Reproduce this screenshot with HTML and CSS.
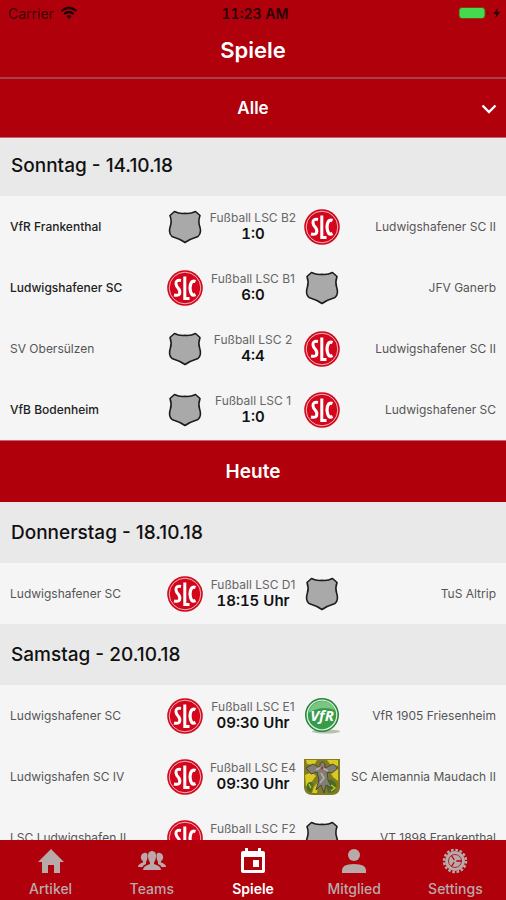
FILE: index.html
```html
<!DOCTYPE html>
<html lang="de">
<head>
    <meta charset="UTF-8" />
    <meta name="viewport" content="width=device-width, initial-scale=1.0" />
    <title>Spiele</title>
    <link rel="stylesheet" href="styles.css">
</head>
<body>
    <!-- Shared club crests -->
    <svg class="sprite" aria-hidden="true">
        <symbol id="crest-blank" viewBox="0 0 36 36">
            <path d="M7.500 2.500 Q12.500 5 18 4.300 Q23.500 5 28.500 2.500 L33 6.500 Q31 12 32.600 17 Q35 24 31 27.500 Q23 30 18 33.500 Q13 30 5 27.500 Q1 24 3.400 17 Q5 12 3 6.500 Z" fill="#a9a9a9" stroke="#1c1c1c" stroke-width="1.600" stroke-linejoin="round" />
        </symbol>
        <symbol id="crest-slc" viewBox="0 0 36 36">
            <circle cx="18" cy="18" r="17.800" fill="#d2071d" />
            <circle cx="18" cy="18" r="15.800" fill="none" stroke="#f3b3b8" stroke-width="1" />
            <g fill="none" stroke="#fff">
                <path d="M14 10.500 Q8.500 9.500 9 14 Q9.200 16 11.500 18.500 Q13.500 21 12.500 24 Q11.500 26 7 25" stroke-width="3" />
                <path d="M17.800 6.500 V28.500 H22.500" stroke-width="3" />
                <path d="M28.500 11.500 Q23.500 9.500 23 18 Q23.500 27 28.500 24.500" stroke-width="3.200" />
            </g>
        </symbol>
        <symbol id="crest-vfr" viewBox="0 0 36 36">
            <ellipse cx="22" cy="33.500" rx="14" ry="2" fill="#b5c2ac" />
            <circle cx="18" cy="17" r="17" fill="#1f8439" />
            <circle cx="18" cy="17" r="14.800" fill="#369c48" stroke="#d9efd9" stroke-width="1.300" />
            <path d="M4 15 Q8 3 19 3 Q29 4 31 12 Q18 7 4 15 Z" fill="#7cc483" />
            <text x="18" y="23" text-anchor="middle" class="crest-text">VfR</text>
        </symbol>
        <symbol id="crest-maudach" viewBox="0 0 36 36">
            <path d="M0 0 H36 V29 Q35 36 28 36 H8 Q1 36 0 29 Z" fill="#817b25" />
            <path d="M2 1 H13 L10 6 L3 5 Z M23 1 H34 V7 L26 5 Z M1 16 L8 13 L12 17 L6 25 L2 27 Z M26 13 L34 10 V22 L29 18 Z M10 28 L14 23 L13 34 H8 Z" fill="#d8ca20" />
            <path d="M22 25 Q25 18 30 22 Q35 27 30 33 L24 34 Z M3 25 Q8 20 9 26 L7 34 L3 31 Z" fill="#477025" />
            <path d="M16 5 Q18 1 21 5 V9 L29 5 L34 9 L28 14 L23 13 L24 21 L28 29 L22 26 L20 34 L17 26 L12 31 L15 21 L13 13 L7 15 L2 9 L9 5 L16 9 Z" fill="#817e74" stroke="#4b4934" />
            <path d="M12 11 L17 8 L24 12 M17 14 L20 19 L16 24" fill="none" stroke="#b8b2ac" stroke-width="1.500" />
            <circle cx="18" cy="9" r="1.500" fill="#ac303b" />
            <path d="M27 26 L31 29 L27 32 M5 25 L7 29" fill="none" stroke="#cdbf27" stroke-width="1.500" />
        </symbol>
    </svg>

    <header class="topbar">
        <div class="statusbar">
            <div class="carrier">
                <span>Carrier</span>
                <svg width="18" height="14" viewBox="0 0 18 14" aria-hidden="true">
                    <path d="M1.500 5 Q9 -1.500 16.500 5 M4.300 8 Q9 4 13.700 8" fill="none" stroke="#190000" stroke-width="2.200" />
                    <path d="M6.500 10 Q9 8 11.500 10 L9 13 Z" fill="#190000" />
                </svg>
            </div>
            <time class="clock">11:23 AM</time>
            <svg class="battery" width="44" height="14" viewBox="0 0 44 14" aria-hidden="true">
                <rect x="1" y="1.500" width="26" height="11" rx="3" fill="#45d950" stroke="#7d420b" />
                <path d="M29 4.500 Q32 7 29 9.500 Z" fill="#5c0006" />
                <path d="M39.500 2 L35.500 8 H38.200 L37.500 12 L42 6 H39.200 Z" fill="#190000" />
            </svg>
        </div>
        <h1>Spiele</h1>
    </header>

    <div class="filter">
        <select aria-label="Team auswählen">
            <option>Alle</option>
        </select>
        <svg class="chevron" width="16" height="10" viewBox="0 0 16 10" aria-hidden="true">
            <path d="M1.500 1.500 L8 8 L14.500 1.500" fill="none" stroke="#fff" stroke-width="2.400" />
        </svg>
    </div>

    <main class="schedule">
        <h2 class="day">Sonntag - 14.10.18</h2>
        <ul class="matches">
            <li class="match">
                <span class="team winner">VfR Frankenthal</span>
                <svg class="crest"><use href="#crest-blank" /></svg>
                <div class="result"><span class="league">Fußball LSC B2</span><strong>1:0</strong></div>
                <svg class="crest"><use href="#crest-slc" /></svg>
                <span class="team away">Ludwigshafener SC II</span>
            </li>
            <li class="match">
                <span class="team winner">Ludwigshafener SC</span>
                <svg class="crest"><use href="#crest-slc" /></svg>
                <div class="result"><span class="league">Fußball LSC B1</span><strong>6:0</strong></div>
                <svg class="crest"><use href="#crest-blank" /></svg>
                <span class="team away">JFV Ganerb</span>
            </li>
            <li class="match">
                <span class="team">SV Obersülzen</span>
                <svg class="crest"><use href="#crest-blank" /></svg>
                <div class="result"><span class="league">Fußball LSC 2</span><strong>4:4</strong></div>
                <svg class="crest"><use href="#crest-slc" /></svg>
                <span class="team away">Ludwigshafener SC II</span>
            </li>
            <li class="match">
                <span class="team winner">VfB Bodenheim</span>
                <svg class="crest"><use href="#crest-blank" /></svg>
                <div class="result"><span class="league">Fußball LSC 1</span><strong>1:0</strong></div>
                <svg class="crest"><use href="#crest-slc" /></svg>
                <span class="team away">Ludwigshafener SC</span>
            </li>
        </ul>

        <h2 class="today">Heute</h2>

        <h2 class="day">Donnerstag - 18.10.18</h2>
        <ul class="matches">
            <li class="match">
                <span class="team">Ludwigshafener SC</span>
                <svg class="crest"><use href="#crest-slc" /></svg>
                <div class="result"><span class="league">Fußball LSC D1</span><strong>18:15 Uhr</strong></div>
                <svg class="crest"><use href="#crest-blank" /></svg>
                <span class="team away">TuS Altrip</span>
            </li>
        </ul>

        <h2 class="day">Samstag - 20.10.18</h2>
        <ul class="matches">
            <li class="match">
                <span class="team">Ludwigshafener SC</span>
                <svg class="crest"><use href="#crest-slc" /></svg>
                <div class="result"><span class="league">Fußball LSC E1</span><strong>09:30 Uhr</strong></div>
                <svg class="crest"><use href="#crest-vfr" /></svg>
                <span class="team away">VfR 1905 Friesenheim</span>
            </li>
            <li class="match">
                <span class="team">Ludwigshafen SC IV</span>
                <svg class="crest"><use href="#crest-slc" /></svg>
                <div class="result"><span class="league">Fußball LSC E4</span><strong>09:30 Uhr</strong></div>
                <svg class="crest"><use href="#crest-maudach" /></svg>
                <span class="team away">SC Alemannia Maudach II</span>
            </li>
            <li class="match">
                <span class="team">LSC Ludwigshafen II</span>
                <svg class="crest"><use href="#crest-slc" /></svg>
                <div class="result"><span class="league">Fußball LSC F2</span></div>
                <svg class="crest"><use href="#crest-blank" /></svg>
                <span class="team away">VT 1898 Frankenthal</span>
            </li>
        </ul>
    </main>

    <nav class="tabbar">
        <a href="#artikel">
            <svg width="28" height="28" viewBox="0 0 28 28" aria-hidden="true">
                <path d="M14 2 L27 15 H23 V26 H17 V18 H11 V26 H5 V15 H1 Z" fill="currentColor" />
            </svg>
            Artikel
        </a>
        <a href="#teams">
            <svg width="28" height="28" viewBox="0 0 28 28" aria-hidden="true">
                <g fill="currentColor">
                    <path d="M6 6 Q10 5 9.500 10 Q9 14 8 15 L8 17 Q5 18 4.500 20 H0 Q0 17 5 15.500 V14 Q2.500 13 3 9 Q3.500 6.500 6 6 Z" />
                    <path d="M22 6 Q18 5 18.500 10 Q19 14 20 15 L20 17 Q23 18 23.500 20 H28 Q28 17 23 15.500 V14 Q25.500 13 25 9 Q24.500 6.500 22 6 Z" />
                    <path d="M14 4 Q18.500 4 18 10 Q17.500 14 16 15.500 V17 Q23 19 23 23 H5 Q5 19 12 17 V15.500 Q10.500 14 10 10 Q9.500 4 14 4 Z" />
                </g>
            </svg>
            Teams
        </a>
        <a href="#spiele" class="active" aria-current="page">
            <svg width="28" height="28" viewBox="0 0 28 28" aria-hidden="true">
                <path fill="currentColor" fill-rule="evenodd" d="M6 1 H9 V4 H19 V1 H22 V4 H24 Q26 4 26 6 V24 Q26 26 24 26 H4 Q2 26 2 24 V6 Q2 4 4 4 H6 Z M5 10 V23 H23 V10 Z M14 13 H20 V20 H14 Z" />
            </svg>
            Spiele
        </a>
        <a href="#mitglied">
            <svg width="28" height="28" viewBox="0 0 28 28" aria-hidden="true">
                <circle cx="14" cy="8" r="6" fill="currentColor" />
                <path d="M2 26 V23 Q2 17 14 17 Q26 17 26 23 V26 Z" fill="currentColor" />
            </svg>
            Mitglied
        </a>
        <a href="#settings">
            <svg width="28" height="28" viewBox="0 0 28 28" aria-hidden="true">
                <circle cx="14" cy="14" r="11" fill="none" stroke="currentColor" stroke-width="2.500" stroke-dasharray="2.600 1.720" />
                <circle cx="14" cy="14" r="10" fill="currentColor" />
                <circle cx="14" cy="14" r="6.500" fill="none" stroke="#b0000c" stroke-width="0.800" />
                <path d="M14 14 L10.500 8.500 M14 14 H20.500 M14 14 L10.500 19.500" stroke="#b0000c" stroke-width="1.300" />
                <circle cx="14" cy="14" r="1.500" fill="currentColor" />
            </svg>
            Settings
        </a>
    </nav>
</body>
</html>
```
FILE: styles.css
```css
* {
    box-sizing: border-box;
}

body {
    margin: 0;
    height: 100vh;
    display: flex;
    flex-direction: column;
    overflow: hidden;
    background-color: #f5f5f5;
    color: #111;
    font-family: Inter, "Liberation Sans", sans-serif;
}

.sprite {
    display: none;
}

.crest-text {
    font: italic 700 15px "Open Sans", sans-serif;
    fill: #fff;
}

/* Header */
.topbar {
    flex: none;
    background-color: #b0000c;
    border-bottom: 2px solid #a6414a;
}

.statusbar {
    display: grid;
    grid-template-columns: 1fr auto 1fr;
    align-items: center;
    height: 26px;
    padding: 0 4px 0 8px;
    color: #3b0004;
    font-size: 14px;
}

.carrier {
    display: flex;
    align-items: center;
    gap: 6px;
}

.clock {
    color: #2b0003;
    font-weight: 600;
    font-variant-numeric: tabular-nums;
}

.battery {
    justify-self: end;
}

h1 {
    margin: 0;
    padding-bottom: 2px;
    color: white;
    font-size: 22px;
    font-weight: 600;
    line-height: 49px;
    text-align: center;
}

/* Team filter, lies above the scrolling list */
.filter {
    flex: none;
    position: relative;
    z-index: 1;
    margin-bottom: -3px;
}

.filter select {
    display: block;
    width: 100%;
    height: 59px;
    padding: 0 32px;
    appearance: none;
    border: none;
    border-bottom: 1px solid #c0666c;
    border-radius: 0;
    background-color: #b0000c;
    color: white;
    font: 600 17px Inter, sans-serif;
    text-align-last: center;
}

.chevron {
    position: absolute;
    right: 9px;
    top: 25px;
    pointer-events: none;
}

/* Match list */
.schedule {
    flex: 1;
    min-height: 0;
    overflow-y: auto;
    scrollbar-width: none;
}

.day,
.today {
    margin: 0;
    line-height: 61px;
}

.day {
    padding: 0 11px;
    background-color: #e9e9e9;
    font-size: 19px;
    font-weight: 500;
}

.today {
    border-top: 1px solid #c0666c;
    background-color: #b0000c;
    color: white;
    font-size: 19px;
    font-weight: 600;
    text-align: center;
}

.matches {
    margin: 0;
    padding: 0;
    list-style: none;
}

.match {
    display: grid;
    grid-template-columns: 1fr 36px 101px 36px 1fr;
    align-items: center;
    height: 61px;
    padding: 0 10px;
}

.team {
    color: #555;
    font-size: 12px;
    white-space: nowrap;
}

.winner {
    color: #222;
    font-weight: 500;
}

.away {
    justify-self: end;
}

.crest {
    width: 36px;
    height: 36px;
}

.result {
    display: flex;
    flex-direction: column;
    align-items: center;
    height: 34px;
    line-height: 16px;
    white-space: nowrap;
}

.league {
    color: #666;
    font-size: 12px;
}

.result strong {
    font-size: 15px;
    font-weight: 600;
    font-variant-numeric: tabular-nums;
}

/* Bottom navigation */
.tabbar {
    flex: none;
    display: grid;
    grid-template-columns: repeat(5, 1fr);
    height: 60px;
    padding-top: 7px;
    background-color: #b0000c;
}

.tabbar a {
    display: flex;
    flex-direction: column;
    align-items: center;
    color: #b9aaaa;
    font-size: 14px;
    font-weight: 500;
    line-height: 28px;
    text-decoration: none;
}

.tabbar .active {
    color: white;
    font-weight: 600;
}
```
